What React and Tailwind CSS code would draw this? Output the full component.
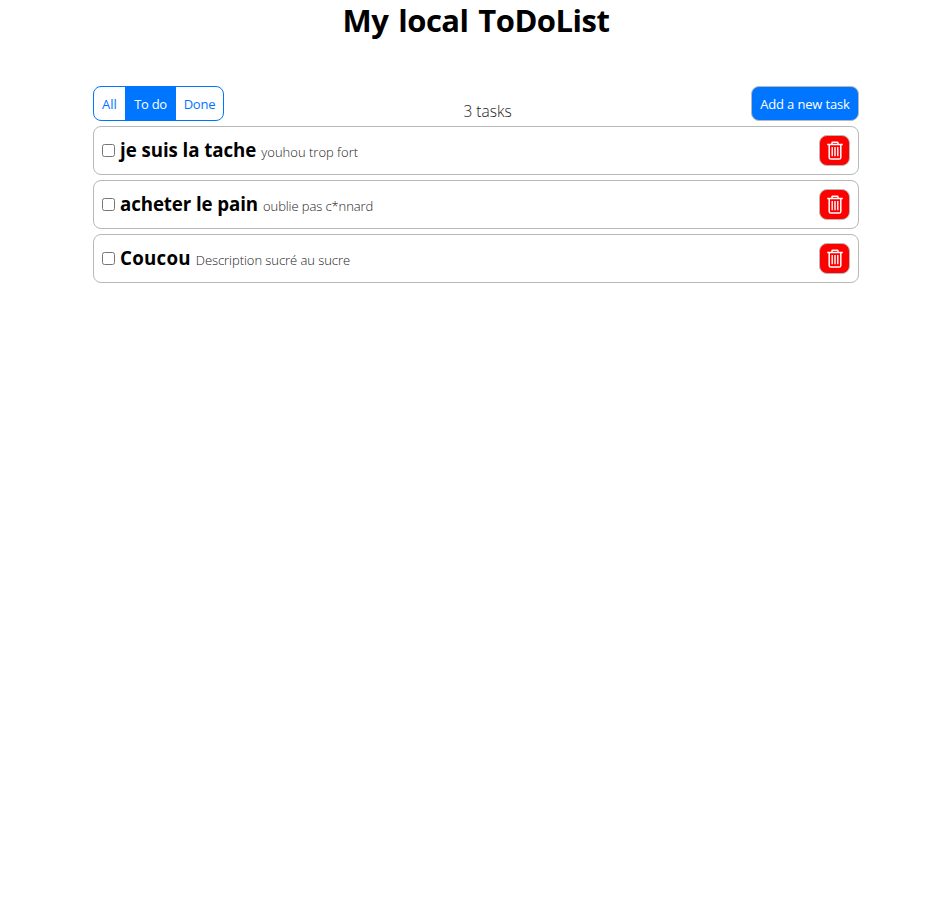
const TASKS = [
  { title: "je suis la tache", text: "youhou trop fort", titleStyle: "tracking-[-0.06px]", textStyle: "" },
  { title: "acheter le pain", text: "oublie pas c*nnard", titleStyle: "tracking-[-0.1px]", textStyle: "tracking-[-0.1px]" },
  { title: "Coucou", text: "Description sucré au sucre", titleStyle: "tracking-[0.25px]", textStyle: "tracking-[-0.06px]" },
];

function TrashIcon() {
  return (
    <svg width="16" height="19" viewBox="0 0 16 19" fill="none" stroke="white" strokeWidth="1.5">
      <path d="M0.2 3.5H15.8M5 3V1.9Q5 1.2 5.8 1.2H10.2Q11 1.2 11 1.9V3M2.2 3.5V16.4Q2.2 18.1 3.9 18.1H12.1Q13.8 18.1 13.8 16.4V3.5" />
      <path d="M5.2 6V15.2M8 6V15.2M10.8 6V15.2" strokeWidth="1.4" />
    </svg>
  );
}

function Task({ title, text, titleStyle, textStyle }) {
  return (
    <li className="flex h-[49px] items-center rounded-[8px] border border-[#b8b8b8] px-2">
      <input type="checkbox" className="m-0 size-[13px] shrink-0" />
      <div className="mb-[2px] ml-[5px] flex items-baseline gap-[5px] whitespace-nowrap">
        <h2 className={`text-[18.72px] leading-[25px] font-bold text-black ${titleStyle}`}>{title}</h2>
        <p className={`text-[13px] leading-[18px] font-light text-[#222] ${textStyle}`}>{text}</p>
      </div>
      <button className="ml-auto flex size-[31px] items-center justify-center rounded-[8px] border border-[#b8b8b8] bg-[#f00]">
        <TrashIcon />
      </button>
    </li>
  );
}

export default function App() {
  return (
    <main className="min-h-screen bg-white font-['Open_Sans','Noto_Sans',sans-serif]">
      <h1 className="h-[43px] text-center text-[31px] leading-[40px] font-bold tracking-[-0.5px] text-black [word-spacing:2.2px]">My local ToDoList</h1>
      <section className="mx-auto mt-[43px] w-[766px]">
        <div className="flex h-[35px] items-end justify-between">
          <div className="flex h-[35px] w-[131px] overflow-hidden rounded-[8px] border border-[#0075ff] text-[13px] text-[#0075ff]">
            <button className="w-[31px] pt-[3px]">All</button>
            <button className="w-[51px] bg-[#0075ff] pt-[3px] tracking-[-0.3px] text-white">To do</button>
            <button className="w-[47px] pt-[3px] tracking-[-0.2px]">Done</button>
          </div>
          <p className="-mb-px text-[15.5px] leading-[21px] font-light text-[#222]">3 tasks</p>
          <button className="h-[35px] w-[108px] rounded-[8px] border border-[#b8b8b8] bg-[#0075ff] pt-[3px] text-[13px] tracking-[-0.15px] whitespace-nowrap text-white">Add a new task</button>
        </div>
        <ul className="mt-[5px] flex flex-col gap-[5px]">
          {TASKS.map((task) => (
            <Task key={task.title} {...task} />
          ))}
        </ul>
      </section>
    </main>
  );
}
